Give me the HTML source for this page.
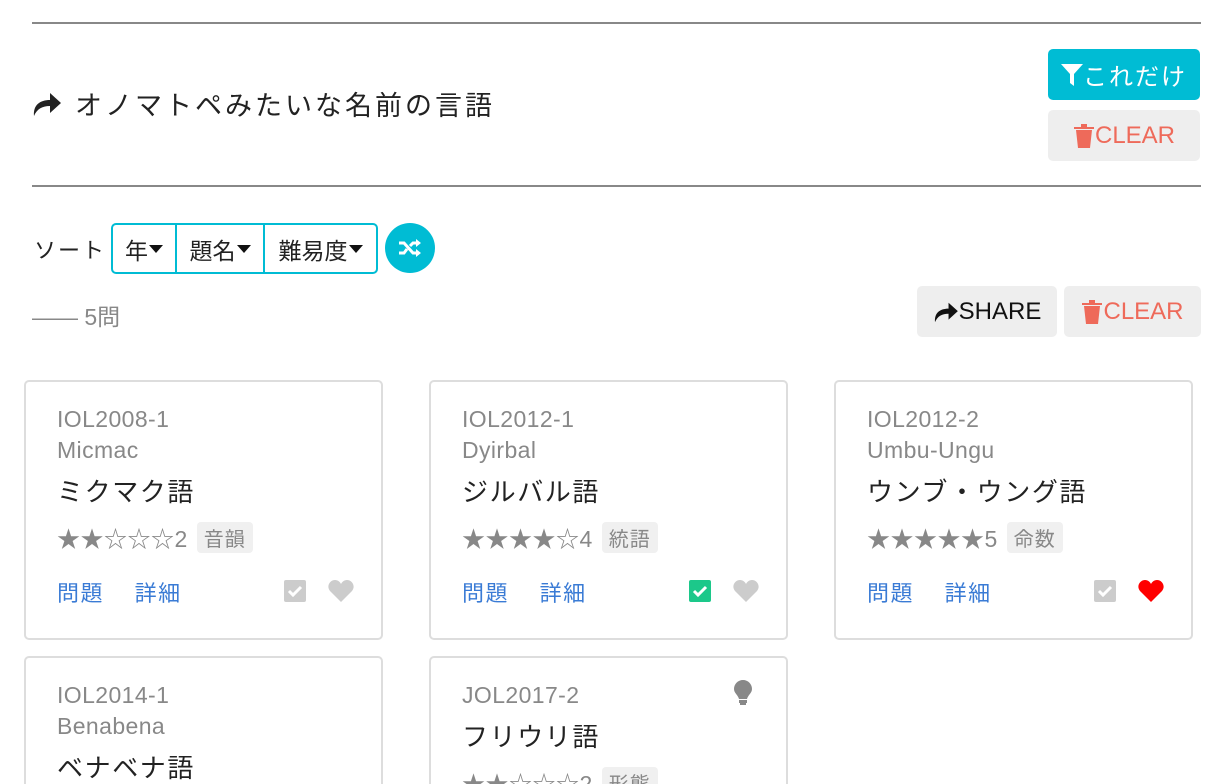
<!DOCTYPE html>
<html><head><meta charset="utf-8"><style>
*{box-sizing:border-box;margin:0;padding:0}
html,body{width:1219px;height:784px;overflow:hidden}
body{background:#fff;font-family:"Liberation Sans","Noto Sans CJK JP",sans-serif;position:relative;color:#222}
.abs{position:absolute}
.hr{position:absolute;left:32px;width:1169px;height:2px;background:#888}
.btn{position:absolute;border-radius:5px;display:flex;align-items:center;justify-content:center;font-size:24px}
.gray{background:#eee;color:#ee6a5a}
.card{position:absolute;width:359px;height:260px;border:2px solid #ddd;border-radius:5px;padding:22px 0 0 31px}
.id{font-size:23px;color:#888;line-height:31px;letter-spacing:0.4px}
.t{font-size:26px;color:#222;margin-top:8px;line-height:36px;letter-spacing:1.6px}
.st{font-size:23px;color:#888;margin-top:11px;display:flex;align-items:center;height:32px;letter-spacing:0.5px}
.tag{background:#f0f0f0;color:#888;font-size:20px;padding:1px 7px;border-radius:4px;margin-left:9px;letter-spacing:1px}
.lk{position:absolute;top:194px;left:31px;font-size:22px;color:#3a7bd5;letter-spacing:1.5px}
.lk span{margin-right:23px}
.ic{position:absolute;top:198px}
.car{display:inline-block;width:0;height:0;border-left:7px solid transparent;border-right:7px solid transparent;border-top:8px solid #111;margin-left:1px;vertical-align:middle}
</style></head><body>
<div class="hr" style="top:22px"></div>
<div class="hr" style="top:185px"></div>
<div class="abs" style="left:32px;top:84px;font-size:27px;display:flex;align-items:center;letter-spacing:3px">
<svg width="30" height="26" viewBox="0 0 30 26"><path d="M2 25 C1 14 8 9 18 9 V2 L29 12 L18 22 V15 C10 15 5 18 2 25Z" fill="#222"/></svg>
<span style="margin-left:13px">オノマトペみたいな名前の言語</span></div>
<div class="btn" style="left:1048px;top:49px;width:152px;height:51px;background:#00bcd4;color:#fff;letter-spacing:2px"><svg width="22" height="24" viewBox="0 0 22 24"><path d="M0 1H22L13 11V23L9 20V11Z" fill="#fff"/></svg>これだけ</div>
<div class="btn gray" style="left:1048px;top:110px;width:152px;height:51px"><svg width="22" height="26" viewBox="0 0 22 26"><path d="M1 4H21V6H1ZM8 1H14V4H8ZM3 7H19L17 25H5Z" fill="#ee6a5a"/></svg>CLEAR</div>
<div class="abs" style="left:34px;top:233px;font-size:22px;letter-spacing:2px">ソート</div>
<div class="abs" style="left:111px;top:223px;width:267px;height:51px;border:2px solid #00bcd4;border-radius:5px;display:flex;font-size:23px;background:#fff">
<div style="width:64px;border-right:2px solid #00bcd4;display:flex;align-items:center;justify-content:center">年<span class="car"></span></div>
<div style="width:88px;border-right:2px solid #00bcd4;display:flex;align-items:center;justify-content:center">題名<span class="car"></span></div>
<div style="flex:1;display:flex;align-items:center;justify-content:center">難易度<span class="car"></span></div></div>
<div class="abs" style="left:385px;top:223px;width:50px;height:50px;border-radius:50%;background:#00bcd4;display:flex;align-items:center;justify-content:center"><svg width="24" height="20" viewBox="0 0 24 20"><path d="M1 5H6L15 15H19M1 15H6L9 11M12 8L15 5H19" stroke="#fff" stroke-width="3" fill="none"/><path d="M18 1L23 5L18 9ZM18 11L23 15L18 19Z" fill="#fff"/></svg></div>
<div class="abs" style="left:32px;top:298px;font-size:23px;color:#888">—— 5問</div>
<div class="btn" style="left:917px;top:286px;width:140px;height:51px;background:#eee;color:#111"><svg width="26" height="22" viewBox="0 0 30 26"><path d="M2 25 C1 14 8 9 18 9 V2 L29 12 L18 22 V15 C10 15 5 18 2 25Z" fill="#111"/></svg>SHARE</div>
<div class="btn gray" style="left:1064px;top:286px;width:137px;height:51px"><svg width="22" height="26" viewBox="0 0 22 26"><path d="M1 4H21V6H1ZM8 1H14V4H8ZM3 7H19L17 25H5Z" fill="#ee6a5a"/></svg>CLEAR</div>

<div class="card" style="left:24px;top:380px"><div class="id">IOL2008-1</div><div class="id">Micmac</div><div class="t">ミクマク語</div><div class="st">★★☆☆☆2<span class="tag">音韻</span></div>
<div class="lk"><span>問題</span> <span>詳細</span></div>
<svg class="ic" style="left:258px" width="22" height="22"><rect width="22" height="22" rx="2" fill="#ccc"/><path d="M5 11L9 15L17 7" stroke="#fff" stroke-width="3" fill="none"/></svg>
<svg class="ic" style="left:302px" width="26" height="22" viewBox="0 0 26 22"><path d="M13 22L2 11C-2 6 2 0 7 0C10 0 12 2 13 4C14 2 16 0 19 0C24 0 28 6 24 11Z" fill="#ccc"/></svg></div>

<div class="card" style="left:429px;top:380px"><div class="id">IOL2012-1</div><div class="id">Dyirbal</div><div class="t">ジルバル語</div><div class="st">★★★★☆4<span class="tag">統語</span></div>
<div class="lk"><span>問題</span> <span>詳細</span></div>
<svg class="ic" style="left:258px" width="22" height="22"><rect width="22" height="22" rx="2" fill="#1cc88a"/><path d="M5 11L9 15L17 7" stroke="#fff" stroke-width="3" fill="none"/></svg>
<svg class="ic" style="left:302px" width="26" height="22" viewBox="0 0 26 22"><path d="M13 22L2 11C-2 6 2 0 7 0C10 0 12 2 13 4C14 2 16 0 19 0C24 0 28 6 24 11Z" fill="#ccc"/></svg></div>

<div class="card" style="left:834px;top:380px"><div class="id">IOL2012-2</div><div class="id">Umbu-Ungu</div><div class="t">ウンブ・ウング語</div><div class="st">★★★★★5<span class="tag">命数</span></div>
<div class="lk"><span>問題</span> <span>詳細</span></div>
<svg class="ic" style="left:258px" width="22" height="22"><rect width="22" height="22" rx="2" fill="#ccc"/><path d="M5 11L9 15L17 7" stroke="#fff" stroke-width="3" fill="none"/></svg>
<svg class="ic" style="left:302px" width="26" height="22" viewBox="0 0 26 22"><path d="M13 22L2 11C-2 6 2 0 7 0C10 0 12 2 13 4C14 2 16 0 19 0C24 0 28 6 24 11Z" fill="#f00"/></svg></div>

<div class="card" style="left:24px;top:656px;height:128px;border-bottom:none;border-radius:5px 5px 0 0"><div class="id">IOL2014-1</div><div class="id">Benabena</div><div class="t">ベナベナ語</div></div>
<div class="card" style="left:429px;top:656px;height:128px;border-bottom:none;border-radius:5px 5px 0 0"><div class="id">JOL2017-2</div><div class="t">フリウリ語</div><div class="st">★★☆☆☆2<span class="tag">形態</span></div>
<svg class="abs" style="left:303px;top:22px" width="18" height="26" viewBox="0 0 18 26"><path d="M9 0C14 0 18 4 18 9C18 13 14 15 13 19H5C4 15 0 13 0 9C0 4 4 0 9 0Z" fill="#888"/><rect x="5" y="20" width="8" height="3" fill="#888"/><rect x="6" y="23" width="6" height="2" fill="#888"/></svg></div>
</body></html>
